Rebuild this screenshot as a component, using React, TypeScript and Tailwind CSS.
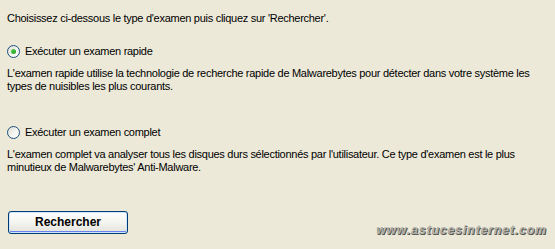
import React from 'react';

function Radio({ checked }: { checked?: boolean }) {
    return (
        <span className="relative flex h-[13px] w-[13px] shrink-0 items-center justify-center rounded-full border border-[#1c5180] bg-gradient-to-br from-[#dcdbd3] via-[#f4f4f0] to-white">
            {checked && (
                <span className="h-[5px] w-[5px] rounded-full bg-gradient-to-br from-[#55d551] to-[#219b1f]" />
            )}
        </span>
    );
}

function Option({ label, checked, lines }: { label: string; checked?: boolean; lines: string[] }) {
    return (
        <div className="flex flex-col">
            <label className="flex h-[13px] items-center gap-[5px]">
                <Radio checked={checked} />
                <span>{label}</span>
            </label>
            <p className="mt-[9px]">
                {lines.map((l, i) => (
                    <span key={i} className="block h-[13px] whitespace-nowrap">{l}</span>
                ))}
            </p>
        </div>
    );
}

export default function App() {
    return (
        <div className="relative h-[249px] w-[555px] overflow-hidden bg-[#ece9d8] pl-[7px] pt-[12px] text-[11px] leading-[13px] tracking-[-0.28px] text-black" style={{ fontFamily: '"Liberation Sans", Arial, sans-serif' }}>
            <p className="h-[13px] whitespace-nowrap">Choisissez ci-dessous le type d'examen puis cliquez sur 'Rechercher'.</p>

            <div className="mt-[20px]">
                <Option
                    checked
                    label="Exécuter un examen rapide"
                    lines={[
                        "L'examen rapide utilise la technologie de recherche rapide de Malwarebytes pour détecter dans votre système les",
                        "types de nuisibles les plus courants.",
                    ]}
                />
            </div>

            <div className="mt-[33px]">
                <Option
                    label="Exécuter un examen complet"
                    lines={[
                        "L'examen complet va analyser tous les disques durs sélectionnés par l'utilisateur. Ce type d'examen est le plus",
                        "minutieux de Malwarebytes' Anti-Malware.",
                    ]}
                />
            </div>

            <button className="ml-[1px] mt-[37px] flex h-[23px] w-[120px] items-center justify-center rounded-[3px] border border-[#003c74] bg-gradient-to-b from-white via-[#f4f4f0] to-[#e3e2da] text-[12px] font-bold tracking-normal text-black shadow-[inset_0_0_0_1px_#cee7ff,inset_0_-1px_0_1px_#6982ee]">
                Rechercher
            </button>

            {/* watermark */}
            <span className="absolute bottom-[12px] right-[8px] text-[12px] font-bold italic tracking-[1px] text-[#b4b4ac] [text-shadow:1px_1px_0_#55554f,0_1px_0_#77776f]">
                www.astucesinternet.com
            </span>
        </div>
    );
}
